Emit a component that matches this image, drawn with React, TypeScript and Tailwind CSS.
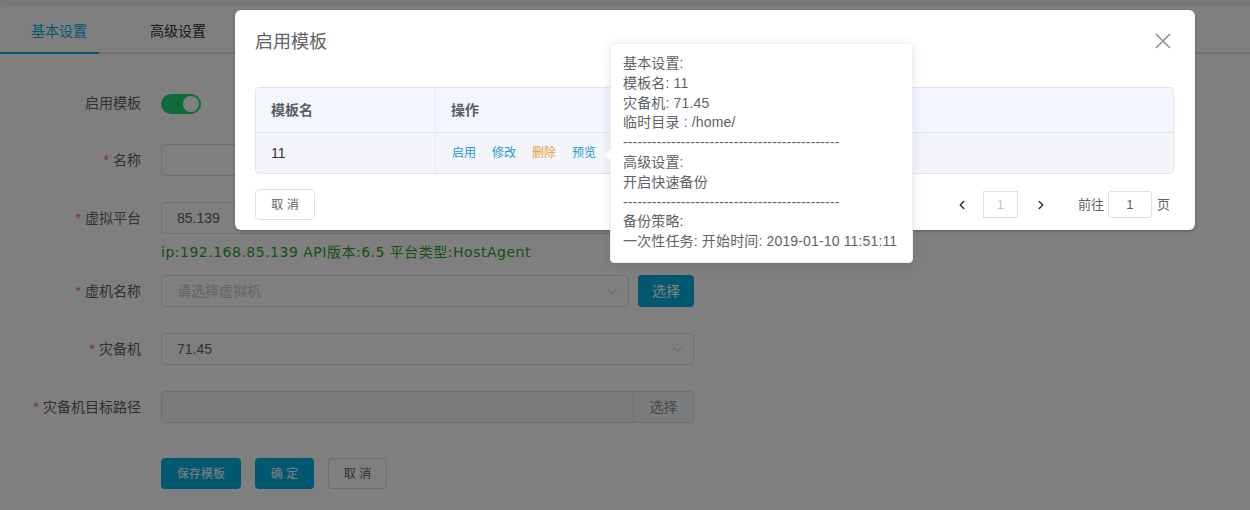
import { ChevronDown, ChevronLeft, ChevronRight } from "lucide-react";

const FONT = "font-['Liberation_Sans','Noto_Sans_CJK_SC',sans-serif]";

const DASHES = "---------------------------------------------";

const PREVIEW_LINES = [
  "基本设置:",
  "模板名: 11",
  "灾备机: 71.45",
  "临时目录 : /home/",
  DASHES,
  "高级设置:",
  "开启快速备份",
  DASHES,
  "备份策略:",
  "一次性任务: 开始时间: 2019-01-10 11:51:11",
];

function FormLabel({ text, required = true }: { text: string; required?: boolean }) {
  return (
    <div className="w-[141px] shrink-0 text-right text-[14px] leading-[32px] text-[#606266]">
      {required && <span className="mr-[4px] text-[#f56c6c]">*</span>}
      {text}
    </div>
  );
}

function PageForm() {
  return (
    <div className="flex flex-col pt-[33px]">
      <div className="flex h-[32px] items-center">
        <FormLabel text="启用模板" required={false} />
        <div className="ml-[20px] mt-[2px] flex h-[20px] w-[40px] items-center justify-end rounded-full bg-[#1ed872] pr-[2px]">
          <div className="h-[16px] w-[16px] rounded-full bg-white" />
        </div>
      </div>

      <div className="mt-[25px] flex h-[32px] items-center">
        <FormLabel text="名称" />
        <div className="ml-[20px] h-[32px] w-[533px] rounded-[4px] border border-[#dcdfe6] bg-white" />
      </div>

      <div className="mt-[26px] flex h-[32px] items-center">
        <FormLabel text="虚拟平台" />
        <div className="ml-[20px] flex h-[32px] w-[533px] items-center rounded-[4px] border border-[#dcdfe6] bg-white px-[15px] text-[14px] text-[#606266]">
          85.139
        </div>
      </div>
      <div className="ml-[161px] mt-[8px] font-['DejaVu_Sans','Noto_Sans_CJK_SC',sans-serif] text-[14px] leading-[20px] tracking-[0.5px] text-[#2aa62a]">
        ip:192.168.85.139 API版本:6.5 平台类型:HostAgent
      </div>

      <div className="mt-[13px] flex h-[32px] items-center">
        <FormLabel text="虚机名称" />
        <div className="ml-[20px] flex h-[32px] w-[468px] items-center justify-between rounded-[4px] border border-[#dcdfe6] bg-white pl-[15px] pr-[8px] text-[14px] text-[#c8cbd1]">
          请选择虚拟机
          <ChevronDown size={15} strokeWidth={1.5} className="text-[#c0c4cc]" />
        </div>
        <button className="ml-[9px] h-[32px] w-[56px] rounded-[4px] bg-[#05b0e0] text-[14px] text-white">
          选择
        </button>
      </div>

      <div className="mt-[26px] flex h-[32px] items-center">
        <FormLabel text="灾备机" />
        <div className="ml-[20px] flex h-[32px] w-[533px] items-center justify-between rounded-[4px] border border-[#dcdfe6] bg-white pl-[15px] pr-[8px] text-[14px] text-[#606266]">
          71.45
          <ChevronDown size={15} strokeWidth={1.5} className="text-[#c0c4cc]" />
        </div>
      </div>

      <div className="mt-[26px] flex h-[32px] items-center">
        <FormLabel text="灾备机目标路径" />
        <div className="ml-[20px] flex h-[32px] w-[533px] overflow-hidden rounded-[4px] border border-[#dcdfe6] bg-[#f5f7fa]">
          <div className="flex-1" />
          <div className="flex w-[60px] items-center justify-center border-l border-[#dcdfe6] text-[14px] text-[#909399]">
            选择
          </div>
        </div>
      </div>

      <div className="ml-[161px] mt-[35px] flex gap-[14px] text-[12px]">
        <button className="h-[31px] w-[80px] rounded-[4px] bg-[#05b0e0] text-white">保存模板</button>
        <button className="h-[31px] w-[59px] rounded-[4px] bg-[#05b0e0] text-white">确 定</button>
        <button className="h-[31px] w-[59px] rounded-[4px] border border-[#dcdfe6] bg-white text-[#606266]">
          取 消
        </button>
      </div>
    </div>
  );
}

function TemplateDialog() {
  return (
    <div className="absolute left-[235px] top-[10px] h-[220px] w-[960px] rounded-[6px] bg-white shadow-[0_1px_3px_rgba(0,0,0,0.3)]">
      <div className="px-[20px] pt-[20px] text-[18px] leading-[24px] text-[#606266]">启用模板</div>
      <svg className="absolute right-[24px] top-[23px]" width="16" height="16" viewBox="0 0 16 16">
        <path d="M1 1 L15 15 M15 1 L1 15" stroke="#8a8e94" strokeWidth="1.6" fill="none" />
      </svg>

      <div className="mx-[20px] mt-[33px] w-[919px] overflow-hidden rounded-[4px] border border-[#e1e4eb] text-[14px]">
        <div className="flex h-[45px] border-b border-[#e1e4eb] bg-[#f3f7fd] font-bold text-[#5a5e66]">
          <div className="flex w-[180px] items-center border-r border-[#e6e9ef] pl-[15px]">模板名</div>
          <div className="flex flex-1 items-center pl-[15px]">操作</div>
        </div>
        <div className="flex h-[40px] bg-[#f4f5f9] text-[#303133]">
          <div className="flex w-[180px] items-center border-r border-[#e6e9ef] pl-[15px]">11</div>
          <div className="flex flex-1 items-center gap-[16px] pl-[16px] text-[12px]">
            <span className="text-[#1a9ad6]">启用</span>
            <span className="text-[#1a9ad6]">修改</span>
            <span className="text-[#e6a23c]">删除</span>
            <span className="text-[#1a9ad6]">预览</span>
          </div>
        </div>
      </div>

      <div className="ml-[20px] mr-[25px] mt-[15px] flex items-center justify-between">
        <button className="h-[31px] w-[60px] rounded-[4px] border border-[#dcdfe6] bg-white text-[12px] text-[#606266]">
          取 消
        </button>
        <div className="flex items-center text-[13px] text-[#606266]">
          <ChevronLeft size={14} strokeWidth={2.5} className="text-[#303133]" />
          <div className="ml-[14px] flex h-[27px] w-[35px] items-center justify-center border border-[#dcdfe6] text-[#c0c4cc]">
            1
          </div>
          <ChevronRight size={14} strokeWidth={2.5} className="ml-[16px] text-[#303133]" />
          <span className="ml-[30px]">前往</span>
          <div className="ml-[4px] flex h-[27px] w-[44px] items-center justify-center rounded-[3px] border border-[#dcdfe6] text-[#606266]">
            1
          </div>
          <span className="ml-[5px]">页</span>
        </div>
      </div>
    </div>
  );
}

function PreviewPopover() {
  return (
    <div className="absolute left-[610px] top-[43px] h-[220px] w-[303px] rounded-[4px] border border-[#ebeef5] bg-white px-[12px] pt-[10px] text-[14px] leading-[19.8px] tracking-[0.15px] text-[#606266] shadow-[0_2px_12px_0_rgba(0,0,0,0.1)]">
      <div className="absolute left-[-6px] top-[105px] h-0 w-0 border-y-[6px] border-r-[6px] border-y-transparent border-r-white" />
      {PREVIEW_LINES.map((line, i) => (
        <div key={i} className="whitespace-nowrap">
          {line}
        </div>
      ))}
    </div>
  );
}

export default function App() {
  return (
    <div className={`relative h-[510px] w-[1250px] overflow-hidden bg-[#ecf0f6] ${FONT}`}>
      <div className="pt-[7px]">
        <div className="h-[503px] rounded-tl-[4px] bg-white">
          <div className="relative flex h-[47px] border-b-2 border-[#e4e7ed] text-[14px]">
            <div className="w-[118px] pt-[14px] text-center text-[#05b0e0]">基本设置</div>
            <div className="w-[120px] pt-[14px] text-center text-[#303133]">高级设置</div>
            <div className="absolute bottom-[-2px] left-0 h-[2px] w-[99px] bg-[#05b0e0]" />
          </div>
          <PageForm />
        </div>
      </div>

      <div className="absolute inset-0 bg-black/50" />

      <TemplateDialog />
      <PreviewPopover />
    </div>
  );
}
